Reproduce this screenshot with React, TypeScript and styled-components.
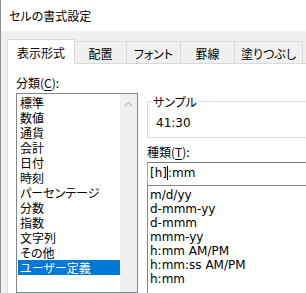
import { createGlobalStyle, styled } from "styled-components";

const GlobalStyle = createGlobalStyle`
  html, body {
    margin: 0;
    padding: 0;
    background: #ffffff;
  }
  #root {
    width: 306px;
    height: 293px;
    overflow: hidden;
  }
`;

const categories = [
  "標準",
  "数値",
  "通貨",
  "会計",
  "日付",
  "時刻",
  "パーセンテージ",
  "分数",
  "指数",
  "文字列",
  "その他",
  "ユーザー定義",
];

const formats = [
  "m/d/yy",
  "d-mmm-yy",
  "d-mmm",
  "mmm-yy",
  "h:mm AM/PM",
  "h:mm:ss AM/PM",
  "h:mm",
];

const tabs = [
  { label: "表示形式", width: 68 },
  { label: "配置", width: 53 },
  { label: "フォント", width: 55 },
  { label: "罫線", width: 55 },
  { label: "塗りつぶし", width: 69 },
];

export default function App() {
  return (
    <>
      <GlobalStyle />
      <Window>
        <TitleBar>セルの書式設定</TitleBar>
        <Body>
          {/* tabs */}
          <TabStrip>
            {tabs.map((t, i) => (
              <Tab key={t.label} $active={i === 0} $width={t.width}>
                {t.label}
              </Tab>
            ))}
          </TabStrip>

          {/* tab page */}
          <Panel>
            <LeftColumn>
              <Label>
                分類(<u>C</u>):
              </Label>
              <CategoryList>
                <CategoryItems>
                  {categories.map((c) => (
                    <CategoryItem key={c} $selected={c === "ユーザー定義"}>
                      {c}
                    </CategoryItem>
                  ))}
                </CategoryItems>
                <ScrollBar>
                  <svg width="9" height="6" viewBox="0 0 9 6">
                    <path d="M1 5 L4.5 1.5 L8 5" fill="none" stroke="#c2c2c2" strokeWidth="1.3" />
                  </svg>
                </ScrollBar>
              </CategoryList>
            </LeftColumn>

            <RightColumn>
              <SampleGroup>
                <SampleLegend>サンプル</SampleLegend>
                <SampleValue>41:30</SampleValue>
              </SampleGroup>
              <TypeLabel>
                種類(<u>T</u>):
              </TypeLabel>
              <TypeInput>
                [h]
                <Caret />
                :mm
              </TypeInput>
              <FormatList>
                {formats.map((f) => (
                  <FormatItem key={f}>{f}</FormatItem>
                ))}
              </FormatList>
            </RightColumn>
          </Panel>
        </Body>
      </Window>
    </>
  );
}

const Window = styled.div`
  width: 420px;
  height: 293px;
  border-left: 1px solid #8c8c8c;
  background: #f0f0f0;
  font-family: "Noto Sans CJK JP", "Noto Sans", sans-serif;
  font-feature-settings: "palt";
  font-size: 12px;
  color: #000;
  display: flex;
  flex-direction: column;
`;

const TitleBar = styled.div`
  height: 31px;
  background: #ffffff;
  display: flex;
  align-items: center;
  padding-left: 8px;
  font-size: 12px;
`;

const Body = styled.div`
  flex: 1;
  padding: 8px 0 0 6px;
  display: flex;
  flex-direction: column;
  min-height: 0;
`;

const TabStrip = styled.div`
  display: flex;
  align-items: flex-end;
  height: 24px;
  position: relative;
  z-index: 1;
`;

const Tab = styled.div<{ $active?: boolean; $width: number }>`
  box-sizing: border-box;
  width: ${(p) => p.$width}px;
  height: ${(p) => (p.$active ? 25 : 22)}px;
  margin-bottom: ${(p) => (p.$active ? -1 : 0)}px;
  margin-left: -1px;
  &:first-child {
    margin-left: 0;
  }
  border: 1px solid #d9d9d9;
  border-bottom: none;
  background: ${(p) => (p.$active ? "#ffffff" : "#f0f0f0")};
  display: flex;
  align-items: center;
  justify-content: center;
  padding-top: ${(p) => (p.$active ? 0 : 1)}px;
  white-space: nowrap;
`;

const Panel = styled.div`
  flex: 1;
  min-height: 0;
  background: #ffffff;
  border: 1px solid #d9d9d9;
  border-bottom: none;
  padding: 11px 0 0 8px;
  display: flex;
  gap: 9px;
`;

const LeftColumn = styled.div`
  width: 122px;
  display: flex;
  flex-direction: column;
`;

const Label = styled.div`
  line-height: 15px;
  height: 15px;
  margin-bottom: 3px;
  u {
    text-decoration-thickness: 1px;
    text-underline-offset: 2px;
  }
`;

const CategoryList = styled.div`
  box-sizing: border-box;
  height: 230px;
  border: 1px solid #828790;
  display: flex;
`;

const CategoryItems = styled.div`
  flex: 1;
  padding-top: 1px;
`;

const CategoryItem = styled.div<{ $selected?: boolean }>`
  height: 15px;
  line-height: 15px;
  margin: 0 0 0 1px;
  padding-left: 2px;
  white-space: nowrap;
  background: ${(p) => (p.$selected ? "#0078d7" : "transparent")};
  color: ${(p) => (p.$selected ? "#ffffff" : "#000000")};
`;

const ScrollBar = styled.div`
  width: 17px;
  background: #f0f0f0;
  display: flex;
  justify-content: center;
  padding-top: 7px;
  box-sizing: border-box;
`;

const RightColumn = styled.div`
  flex: 1;
  display: flex;
  flex-direction: column;
  padding-top: 19px;
`;

const SampleGroup = styled.fieldset`
  margin: 0;
  border: 1px solid #dcdcdc;
  padding: 0 8px 6px 8px;
`;

const SampleLegend = styled.legend`
  padding: 0 1px;
  margin-left: -4px;
  line-height: 15px;
`;

const SampleValue = styled.div`
  margin-top: 7px;
  line-height: 15px;
  font-family: "DejaVu Sans", sans-serif;
  font-size: 12px;
`;

const TypeLabel = styled(Label)`
  margin-top: 6px;
`;

const TypeInput = styled.div`
  box-sizing: border-box;
  height: 23px;
  border: 1px solid #a8a8a8;
  border-top-color: #7a7a7a;
  border-bottom: none;
  padding: 3px 0 0 2px;
  line-height: 15px;
  font-family: "DejaVu Sans", sans-serif;
  font-size: 12px;
  white-space: nowrap;
`;

const Caret = styled.span`
  display: inline-block;
  width: 1px;
  height: 14px;
  background: #000;
  vertical-align: -3px;
`;

const FormatList = styled.div`
  flex: 1;
  border: 1px solid #828790;
  border-bottom: none;
  padding: 2px 0 0 2px;
  font-family: "DejaVu Sans", sans-serif;
  font-size: 12px;
`;

const FormatItem = styled.div`
  height: 14px;
  line-height: 14px;
  white-space: nowrap;
`;
